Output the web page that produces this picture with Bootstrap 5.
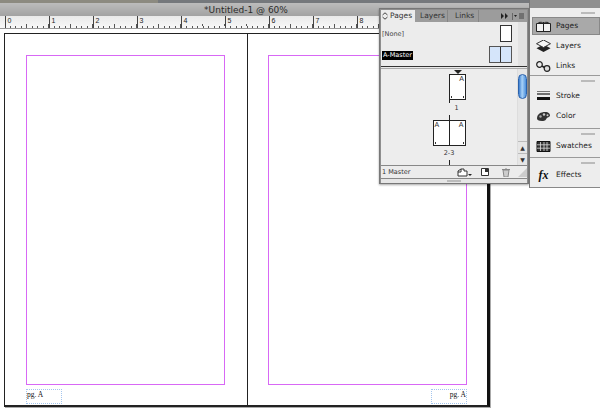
<!DOCTYPE html>
<html lang="en">
<head>
  <meta charset="UTF-8">
  <meta name="viewport" content="width=device-width, initial-scale=1.0">
  <title>Untitled-1 @ 60%</title>
  <link rel="stylesheet" href="https://cdn.jsdelivr.net/npm/bootstrap@5.3.0/dist/css/bootstrap.min.css" />
  <style>
    html, body { width: 600px; height: 412px; overflow: hidden; background: #fff; }
    body { position: relative; font-family: "DejaVu Sans", "Liberation Sans", sans-serif; color: #222; }
    .top-strip { height: 3px; background: linear-gradient(90deg, #8c8a80 0, #8c8a80 158px, #75787c 158px); }
    .title-bar { height: 13px; background: linear-gradient(#bcbcbc, #a2a2a2); font-size: 9px; line-height: 14px; text-align: center; padding-right: 108px; color: #2b2b2b; }
    .ruler { height: 13px; background: linear-gradient(#e9e9e9, #f8f8f8); border-bottom: 1px solid #999; display: flex; padding-left: 4.5px; overflow: hidden; }
    .ruler-unit { flex: 0 0 44px; height: 12px; border-left: 1px solid #444; font: 7px/10px "Liberation Sans", sans-serif; padding-left: 2px; color: #222;
      background:
        repeating-linear-gradient(90deg, #555 0 1px, transparent 1px 5.5px) 4px 10px / 100% 2px no-repeat,
        repeating-linear-gradient(90deg, #555 0 1px, transparent 1px 22px) 20px 8px / 100% 2px no-repeat; }
    .spread { display: flex; width: 486px; height: 374px; margin: 4px 0 0 4px; border: 1px solid #222; border-right: 3px solid #111; border-bottom-width: 2px; box-shadow: 1px 1px 0 #aaa; }
    .doc-page { flex: 0 0 242px; display: flex; flex-direction: column; padding: 21px 0 0 21px; }
    .doc-page + .doc-page { flex: 1 1 auto; border-left: 1px solid #222; padding-left: 20px; }
    .margin-box { width: 199px; height: 330px; border: 1px solid #d868f5; }
    .footer-frame { width: 36px; height: 15px; margin-top: 4px; border: 1px dotted #a3c5ee; font: 7.500px/9px "Liberation Serif", serif; color: #111; }
    .footer-right { margin-left: 163px; text-align: right; }

    .float-panel { position: absolute; left: 379px; top: 8px; width: 150px; height: 176px; background: #8e8e8e; border: 1px solid #777; padding: 1px 1px 0 1px; box-shadow: 0 1px 2px rgba(0,0,0,.35); display: flex; flex-direction: column; }
    .tab-row { height: 12px; display: flex; font-size: 7.5px; line-height: 12px; background: #9c9c9c; color: #333; flex: none; }
    .tab-item { border-right: 1px solid #858585; white-space: nowrap; }
    .tab-on { width: 34px; background: #ececec; padding-left: 1px; border: 0; }
    .tab-on svg { margin-right: 2px; }
    .tab-layers { width: 33px; padding-left: 5px; }
    .tab-links { width: 31px; padding-left: 7px; }
    .tab-menu { margin-left: auto; display: flex; align-items: center; gap: 4px; padding-right: 3px; }
    .masters { height: 44px; flex: none; background: #ececec; border-right: 9px solid #e2e2e2; font-size: 6.5px; padding-left: 1px; color: #444; }
    .master-row { display: flex; align-items: center; justify-content: space-between; }
    .master-row.one { height: 20px; padding-top: 3px; }
    .master-row.two { height: 24px; }
    .master-text { margin-top: 3px; }
    .master-name { background: #000; color: #fff; padding: 0 1px; line-height: 9px; white-space: nowrap; }
    .thumb-one { width: 12px; height: 17px; background: #fff; border: 1px solid #333; margin-right: 6px; }
    .thumb-two { width: 23px; height: 17px; background: #d5e5fa; border: 1px solid #555; margin-right: 6px; display: flex; }
    .thumb-two span { flex: 1; }
    .thumb-two span + span { border-left: 1px solid #333; }
    .split-line { height: 3px; flex: none; background: #e8e8e8; border-top: 1px solid #333; border-bottom: 1px solid #aaa; }
    .pages-area { flex: none; height: 96px; background: #ededed; display: flex; overflow: hidden; }
    .pages-list { width: 138px; display: flex; flex-direction: column; align-items: center; font-size: 6.5px; color: #333; }
    .page-marker { width: 0; height: 0; margin: 1px 0 0 17px; border: 4px solid transparent; border-top-color: #222; border-bottom: 0; flex: none; }
    .corner-dots { background:
        linear-gradient(#333, #333) no-repeat left 1px bottom 1px / 1px 2px,
        linear-gradient(#333, #333) no-repeat right 1px bottom 1px / 1px 2px, #fff; }
    .thumb-page { width: 17px; height: 26px; margin-left: 17px; border: 1px solid #222; font: 7px/8px "Liberation Sans", sans-serif; text-align: right; padding-right: 1px; flex: none; }
    .thumb-spread { width: 33px; height: 26px; border: 1px solid #222; font: 7px/8px "Liberation Sans", sans-serif; display: flex; justify-content: space-between; padding: 0 1px; flex: none; position: relative; }
    .thumb-spread::before { content: ""; position: absolute; left: 15px; top: 0; bottom: 0; width: 1px; background: #222; }
    .tick-line { width: 1px; background: #222; flex: none; }
    .tick-a { height: 3px; }
    .tick-b { height: 5px; margin-top: 3px; }
    .tick-c { height: 5px; margin-top: 3px; }
    .page-label { line-height: 8px; margin-top: 1px; }
    .label-one { margin-left: 15px; }
    .label-two { margin-top: 3px; }
    .scroll-col { width: 10px; background: #e6e6e6; border-left: 1px solid #ddd; display: flex; flex-direction: column; align-items: center; }
    .scroll-thumb { width: 9px; height: 25px; margin-top: 5px; border-radius: 5px; border: 1px solid #2b62ad; background: linear-gradient(90deg, #3d7fd0, #a9d2f7 45%, #4c8fdb); }
    .scroll-gap { flex: 1; }
    .scroll-btn { height: 12px; width: 100%; border-top: 1px solid #bbb; font: 6px/11px "DejaVu Sans", sans-serif; text-align: center; color: #333; }
    .panel-foot { flex: none; height: 12px; background: #ececec; border-top: 1px solid #888; border-bottom: 1px solid #888; font-size: 6.5px; line-height: 11px; color: #333; display: flex; align-items: center; padding-left: 1px; box-sizing: content-box; }
    .foot-icons { margin-left: auto; display: flex; align-items: center; }
    .foot-new { margin-left: 9px; }
    .foot-bin { margin-left: 13px; }
    .foot-grip { margin-left: 8px; }
    .panel-grip { flex: 1; background: #e6e6e6; display: flex; align-items: center; justify-content: center; }
    .grip-bar { display: block; width: 14px; height: 2px; background: #bbb; }

    .dock { position: absolute; left: 529px; top: 0; width: 71px; height: 188px; background: #ededed; border-left: 1px solid #777; border-bottom: 1px solid #888; }
    .dock-head { height: 8px; background: #8f8f8f; }
    .dock-group { border-bottom: 1px solid #9a9a9a; position: relative; }
    .dock-group > .grip-bar { position: absolute; right: 5px; top: 4px; }
    .group-a { height: 68px; padding-top: 9px; }
    .group-b { height: 53px; padding-top: 10px; }
    .group-c { height: 29px; padding-top: 7px; }
    .group-d { height: 30px; padding-top: 7px; border-bottom: 0; }
    .dock-item { height: 20px; display: flex; align-items: center; gap: 5px; padding-left: 6px; font-size: 7.5px; color: #222; }
    .dock-item svg { flex: none; }
    .dock-on { background: #a9a9a9; border: 1px solid #888; margin: 0 0 1px 2px; padding-left: 3px; height: 18px; }
    .fx-glyph { width: 15px; font: italic 700 12px/1 "Liberation Serif", serif; color: #111; text-align: center; }
  </style>
</head>
<body>
  <div class="top-strip"></div>
  <div class="title-bar">*Untitled-1 @ 60%</div>
  <div class="ruler">
    <div class="ruler-unit">0</div><div class="ruler-unit">1</div><div class="ruler-unit">2</div><div class="ruler-unit">3</div>
    <div class="ruler-unit">4</div><div class="ruler-unit">5</div><div class="ruler-unit">6</div><div class="ruler-unit">7</div>
    <div class="ruler-unit">8</div><div class="ruler-unit">9</div><div class="ruler-unit">10</div><div class="ruler-unit">11</div>
    <div class="ruler-unit">12</div><div class="ruler-unit">13</div>
  </div>

  <div class="spread">
    <div class="doc-page">
      <div class="margin-box"></div>
      <div class="footer-frame">pg. A</div>
    </div>
    <div class="doc-page">
      <div class="margin-box"></div>
      <div class="footer-frame footer-right">pg. A</div>
    </div>
  </div>

  <!-- Pages panel -->
  <div class="float-panel">
    <div class="tab-row">
      <div class="tab-item tab-on"><svg width="6" height="8" viewBox="0 0 6 8"><path d="M.5 3L3 .8 5.500 3M.5 5L3 7.200 5.500 5" fill="none" stroke="#444"/></svg>Pages</div>
      <div class="tab-item tab-layers">Layers</div>
      <div class="tab-item tab-links">Links</div>
      <div class="tab-menu">
        <svg width="7" height="6" viewBox="0 0 7 6"><path d="M0 0l3 3-3 3zM4 0l3 3-3 3z" fill="#222"/></svg>
        <svg width="12" height="7" viewBox="0 0 12 7"><path d="M.5 0v7" stroke="#666"/><path d="M2 2h3L3.500 4z" fill="#222"/><path d="M7 1h5M7 3h5M7 5h5" stroke="#444"/></svg>
      </div>
    </div>
    <div class="masters">
      <div class="master-row one"><span class="master-text">[None]</span><span class="thumb-one"></span></div>
      <div class="master-row two"><span class="master-name master-text">A-Master</span><span class="thumb-two"><span></span><span></span></span></div>
    </div>
    <div class="split-line"></div>
    <div class="pages-area">
      <div class="pages-list">
        <span class="page-marker"></span>
        <div class="thumb-page corner-dots">A</div>
        <span class="tick-line tick-a"></span>
        <span class="page-label label-one">1</span>
        <span class="tick-line tick-b"></span>
        <div class="thumb-spread corner-dots"><span>A</span><span>A</span></div>
        <span class="page-label label-two">2-3</span>
        <span class="tick-line tick-c"></span>
      </div>
      <div class="scroll-col">
        <div class="scroll-thumb"></div>
        <div class="scroll-gap"></div>
        <div class="scroll-btn">▲</div>
        <div class="scroll-btn">▼</div>
      </div>
    </div>
    <div class="panel-foot">
      <span>1 Master</span>
      <div class="foot-icons">
        <svg width="15" height="9" viewBox="0 0 15 9"><path d="M1 8V3l3-2h3v2h3v5z" fill="#fff" stroke="#333"/><path d="M4 1v3H1" fill="none" stroke="#333"/><path d="M11 6h4l-2 2z" fill="#222"/></svg>
        <svg class="foot-new" width="8" height="8" viewBox="0 0 8 8"><path d="M.5.5h7v7h-7z" fill="#fff" stroke="#333"/><path d="M4 1h3v3H4z" fill="#333"/></svg>
        <svg class="foot-bin" width="8" height="9" viewBox="0 0 8 9"><path d="M1 2h6l-1 7H2zM0 1.500h8M3 0h2" fill="#ccc" stroke="#888"/></svg>
        <svg class="foot-grip" width="9" height="9" viewBox="0 0 9 9"><path d="M9 0v9H0z" fill="#ccc"/></svg>
      </div>
    </div>
    <div class="panel-grip"><span class="grip-bar"></span></div>
  </div>

  <!-- Dock of collapsed panels -->
  <div class="dock">
    <div class="dock-head"></div>
    <div class="dock-group group-a">
      <span class="grip-bar"></span>
      <div class="dock-item dock-on">
        <svg width="15" height="11" viewBox="0 0 15 11"><path d="M.5 2.500h14v8H.5z" fill="#f2f2f2" stroke="#222"/><path d="M7.500 1v9.500M2.500 1.500q3-1 5 1 2-2 5-1" fill="none" stroke="#222"/></svg>
        <span>Pages</span>
      </div>
      <div class="dock-item">
        <svg width="15" height="12" viewBox="0 0 15 12"><path d="M7.500 4.500l7 3.700-7 3.800-7-3.800z" fill="#222"/><path d="M7.500 0l7 3.700-7 3.800-7-3.800z" fill="#f5f5f5" stroke="#333"/></svg>
        <span>Layers</span>
      </div>
      <div class="dock-item">
        <svg width="15" height="11" viewBox="0 0 15 11"><circle cx="3.500" cy="3.500" r="2.800" fill="#eee" stroke="#222" stroke-width="1.200"/><circle cx="11" cy="7.500" r="2.800" fill="#ddd" stroke="#222" stroke-width="1.200"/><path d="M6 5l2.500 1.500" stroke="#222" stroke-width="1.500"/></svg>
        <span>Links</span>
      </div>
    </div>
    <div class="dock-group group-b">
      <span class="grip-bar"></span>
      <div class="dock-item">
        <svg width="15" height="10" viewBox="0 0 15 10"><path d="M1 .5h13" stroke="#777"/><path d="M1 3h13" stroke="#444" stroke-width="1.500"/><path d="M1 7.500h13" stroke="#111" stroke-width="3"/></svg>
        <span>Stroke</span>
      </div>
      <div class="dock-item">
        <svg width="15" height="11" viewBox="0 0 15 11"><path d="M1 7.500c0-4.500 4-6.500 8-6.500s5 2 5 3.500-3 2-3.500 3-1 2.500-4.500 2.500-5-1-5-2.500z" fill="#333"/><circle cx="8" cy="3.500" r="1.200" fill="#ccc"/><circle cx="11.500" cy="4.200" r="1" fill="#ccc"/><circle cx="4.500" cy="5.500" r="1.200" fill="#aaa"/></svg>
        <span>Color</span>
      </div>
    </div>
    <div class="dock-group group-c">
      <span class="grip-bar"></span>
      <div class="dock-item">
        <svg width="15" height="11" viewBox="0 0 15 11"><path d="M1 .5h13v10H1z" fill="#333" stroke="#111"/><path d="M1 3.800h13M1 7.200h13M4.500 1v9M8 1v9M11 1v9" stroke="#ddd" stroke-width=".8"/></svg>
        <span>Swatches</span>
      </div>
    </div>
    <div class="dock-group group-d">
      <span class="grip-bar"></span>
      <div class="dock-item">
        <span class="fx-glyph">fx</span>
        <span>Effects</span>
      </div>
    </div>
  </div>

  <script src="https://cdn.jsdelivr.net/npm/bootstrap@5.3.0/dist/js/bootstrap.bundle.min.js"></script>
</body>
</html>
